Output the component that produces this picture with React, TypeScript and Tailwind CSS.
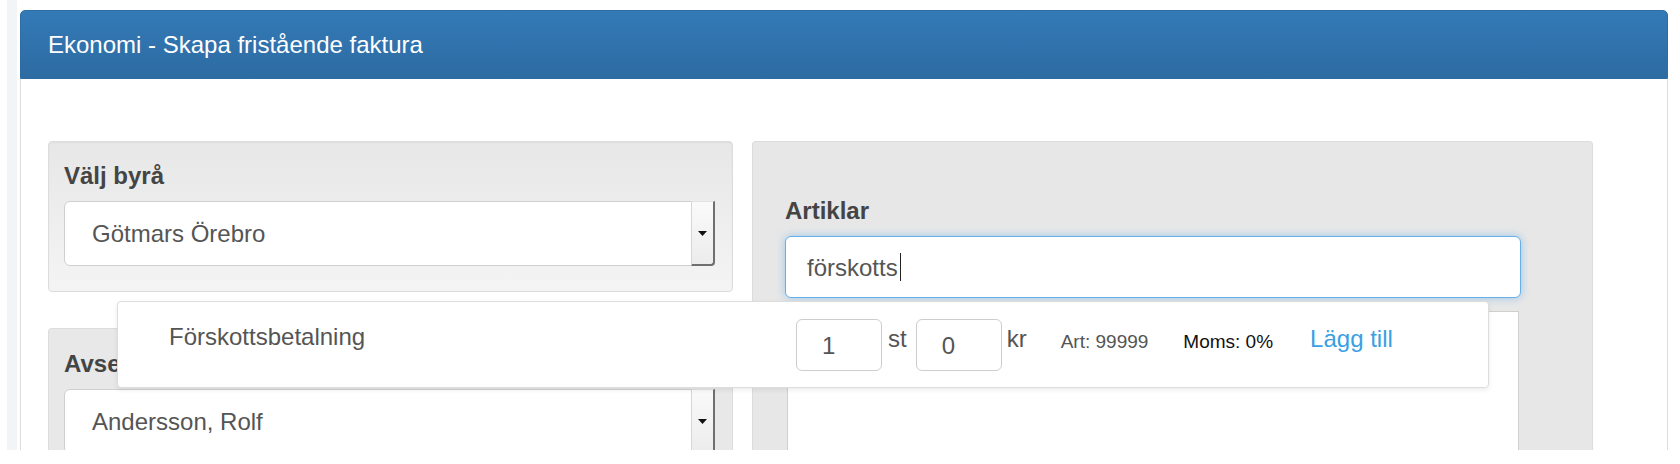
import React from "react";

function SelectBox({ value }: { value: string }) {
  return (
    <div className="flex h-[65px] w-[651px] items-stretch rounded-[6px] border border-[#cfcfcf] bg-white">
      <div className="flex flex-1 items-center pl-[27px] text-[24px] leading-[29px] text-[#555]">{value}</div>
      <div className="-my-px -mr-px flex w-[24px] items-center justify-center rounded-br-[4px] border-b-2 border-l border-r-2 border-t border-b-[#6f6f6f] border-l-[#d6d6d6] border-r-[#6f6f6f] border-t-[#e2e2e2] bg-linear-to-b from-[#fafafa] to-[#ececec]">
        <svg width="9" height="5" viewBox="0 0 9 5">
          <path d="M0 0h9L4.5 5z" fill="#111" />
        </svg>
      </div>
    </div>
  );
}

function NumBox({ value }: { value: string }) {
  return (
    <div className="mt-[17px] flex h-[52px] w-[86px] items-center rounded-[6px] border border-[#cdcdcd] bg-white pl-[25px] text-[24px] leading-[29px] text-[#555]">
      {value}
    </div>
  );
}

export default function App() {
  return (
    <div className="h-[464px] w-[1680px] overflow-hidden bg-white font-['Liberation_Sans',Arial,sans-serif]">
      <div className="flex h-[450px] overflow-hidden">
        <div className="ml-[7px] w-[10px] bg-[#f3f4f6]" />
        <div className="ml-[3px] mt-[10px] flex w-[1648px] flex-col">
          <div className="flex h-[69px] shrink-0 items-center rounded-t-[5px] border border-[#2e6da4] bg-linear-to-b from-[#337ab7] to-[#2d6ba2] pl-[27px] text-[24px] leading-[29px] text-white">
            Ekonomi - Skapa fristående faktura
          </div>
          <div className="relative flex flex-1 gap-[19px] border-x border-[#dddddd] bg-white pl-[27px] pt-[62px]">
            <div className="flex w-[685px] flex-col gap-[36px]">
              <div className="rounded-[4px] border border-[#dcdcdc] bg-linear-to-b from-[#e7e7e7] to-[#f4f4f4] pb-[25px] pl-[15px] pr-[17px] pt-[19px] shadow-[inset_0_1px_2px_rgba(0,0,0,0.04)]">
                <div className="mb-[11px] text-[24px] font-bold leading-[29px] text-[#444]">Välj byrå</div>
                <SelectBox value="Götmars Örebro" />
              </div>
              <div className="flex-1 rounded-t-[4px] border border-b-0 border-[#dcdcdc] bg-[#e8e8e8] pl-[15px] pr-[17px] pt-[20px]">
                <div className="mb-[11px] text-[24px] font-bold leading-[29px] text-[#444]">Avser</div>
                <SelectBox value="Andersson, Rolf" />
              </div>
            </div>
            <div className="flex w-[841px] flex-col rounded-t-[4px] border border-b-0 border-[#dcdcdc] bg-[#e7e7e7] pl-[32px] pt-[54px]">
              <div className="mb-[11px] text-[24px] font-bold leading-[29px] text-[#444]">Artiklar</div>
              <div className="flex h-[62px] w-[736px] items-center rounded-[6px] border border-[#66afe9] bg-white pl-[21px] text-[24px] leading-[29px] text-[#555] shadow-[0_0_8px_rgba(102,175,233,0.6)]">
                förskotts
                <span className="ml-[2px] h-[28px] w-px bg-[#222]" />
              </div>
              <div className="ml-[2px] mt-[13px] w-[732px] flex-1 border-x border-t border-[#d0d0d0] bg-white" />
            </div>
            <div className="absolute left-[96px] top-[222px] flex h-[87px] w-[1372px] items-start rounded-[4px] border border-[#dddddd] bg-white pl-[51px] text-[24px] leading-[29px] shadow-[0_2px_5px_rgba(0,0,0,0.08)]">
              <div className="mt-[20px] w-[627px] text-[#555]">Förskottsbetalning</div>
              <NumBox value="1" />
              <div className="ml-[6px] mt-[22px] text-[#555]">st</div>
              <div className="ml-[9px]">
                <NumBox value="0" />
              </div>
              <div className="ml-[5px] mt-[22px] text-[#555]">kr</div>
              <div className="ml-[34px] mt-[28px] text-[19px] leading-[23px] text-[#555]">Art: 99999</div>
              <div className="ml-[35px] mt-[28px] text-[19px] leading-[23px] text-[#111]">Moms: 0%</div>
              <div className="ml-[37px] mt-[22px] text-[#3a9fe3]">Lägg till</div>
            </div>
          </div>
        </div>
      </div>
    </div>
  );
}
